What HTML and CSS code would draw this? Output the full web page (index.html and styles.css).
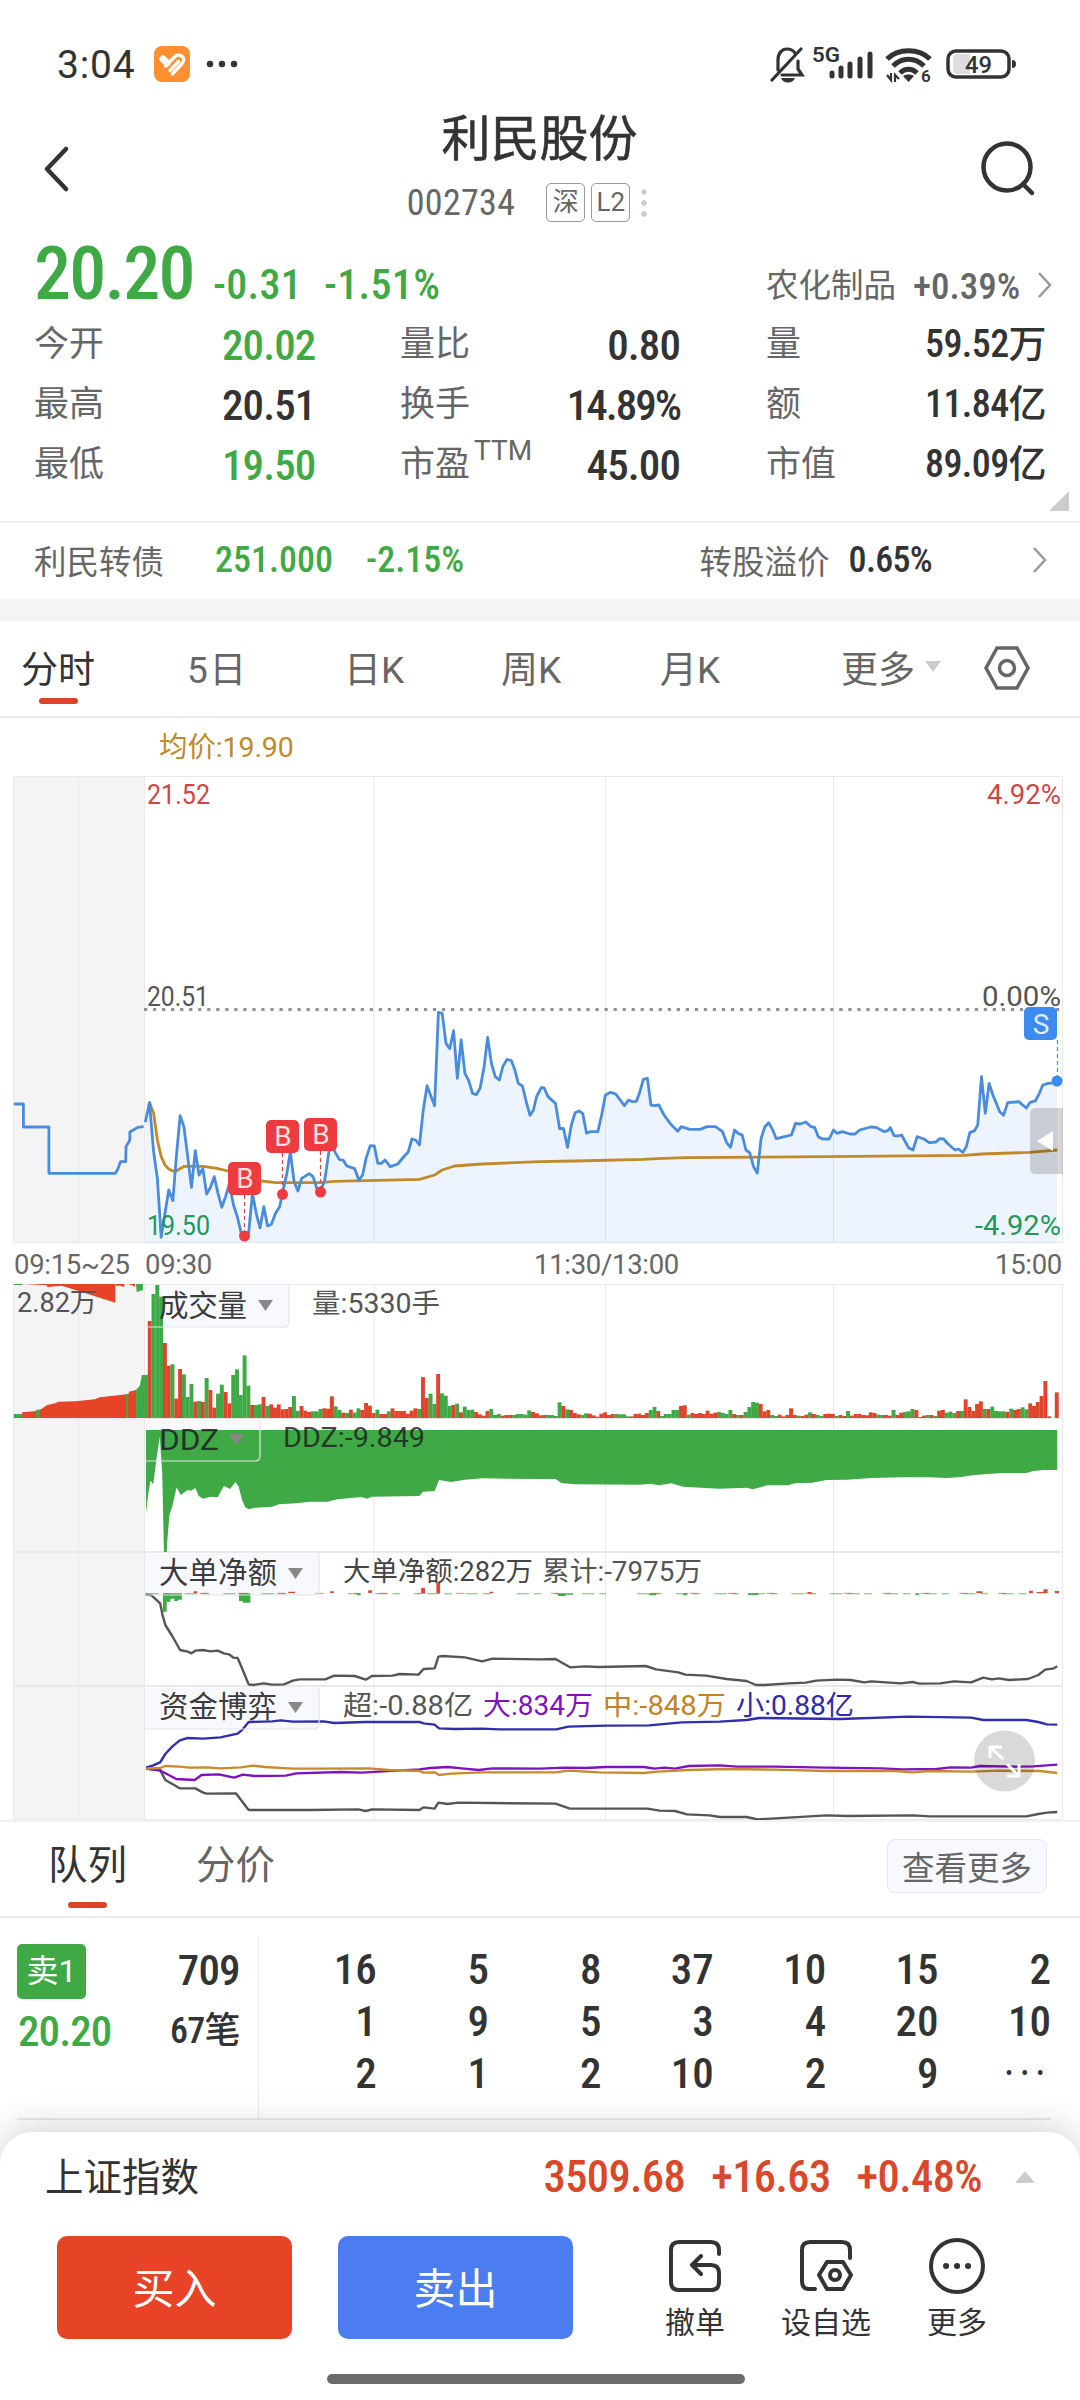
FILE: index.html
```html
<!DOCTYPE html>
<html lang="zh-CN">
<head>
  <meta charset="UTF-8">
  <title>利民股份 002734</title>
  <link rel="stylesheet" href="styles.css">
</head>
<body>
  <div class="status">
    <span class="clock">3:04</span>
    <svg class="app-icon" width="36" height="36" viewBox="0 0 36 36">
      <rect width="36" height="36" rx="8" fill="#ff8f30"/>
      <path d="M9 13L13 17" stroke="#fff" stroke-width="7" stroke-linecap="round"/>
      <path d="M11.500 20L20 11.500C24 6 33 11 28.500 17L18.500 28M16 24.500L24.500 15.500" fill="none" stroke="#fff" stroke-width="3.400" stroke-linecap="round" stroke-linejoin="round"/>
    </svg>
    <svg class="dots" width="34" height="8" viewBox="0 0 34 8"><circle cx="4" cy="4" r="3.2"/><circle cx="16" cy="4" r="3.2"/><circle cx="28" cy="4" r="3.2"/></svg>
    <svg class="sys" width="250" height="44" viewBox="768 44 250 44">
      <g fill="none" stroke="#333" stroke-width="3.2" stroke-linecap="round">
        <path d="M778 70V60C778 53 782 49 787 49C791 49 793 50 795 53M798 61V69L802 75H782"/>
        <path d="M801 49L772 80"/>
      </g>
      <path d="M781 78h14c-2 6-12 6-14 0z" fill="#333"/>
      <text class="net" x="812" y="62" textLength="28" lengthAdjust="spacingAndGlyphs">5G</text>
      <g stroke="#333" stroke-width="5" stroke-linecap="round">
        <path d="M832 73v3M841 68v8M850 64v12M860 59v17M870 54v22"/>
      </g>
      <g fill="none" stroke="#333" stroke-width="5">
        <path d="M887 59C898 48 919 48 930 59"/>
        <path d="M893 66C902 57 915 57 924 66"/>
        <path d="M900 73C905 68 912 68 917 73"/>
      </g>
      <path d="M903 76c3-2 8-2 11 0l-5.500 6z" fill="#333"/>
      <path d="M887 75l4 5V73M895 82V75l4 4" fill="none" stroke="#333" stroke-width="2.200"/>
      <text class="net wifi6" x="921" y="82">6</text>
      <rect x="948" y="51" width="61" height="26" rx="8" fill="none" stroke="#333" stroke-width="3.500"/>
      <path d="M958 54h12v20h-12q-5 0-5-5V59q0-5 5-5z" fill="#ddd"/>
      <path d="M1012 60q4 0 4 4t-4 4z" fill="#333"/>
      <text class="net batt" x="965" y="73" textLength="27" lengthAdjust="spacingAndGlyphs">49</text>
    </svg>
  </div>

  <header class="header">
    <svg class="back" width="30" height="50" viewBox="0 0 30 50"><path d="M25 5L6 25L25 45"/></svg>
    <div class="title">
      <h1>利民股份</h1>
      <div class="code-row">
        <span class="code">002734</span>
        <span class="tag">深</span>
        <span class="tag">L2</span>
        <i class="more-dots"></i>
      </div>
    </div>
    <svg class="search" width="56" height="56" viewBox="0 0 56 56"><circle cx="26" cy="26" r="23.500"/><path d="M42 43L51 52"/></svg>
  </header>

  <section class="quote">
    <div class="price-row">
      <span class="price num green">20.20</span>
      <span class="chg green">-0.31</span>
      <span class="chg green pct">-1.51%</span>
      <span class="industry">农化制品</span>
      <span class="ind-chg">+0.39%</span>
      <svg class="chev" width="16" height="28" viewBox="0 0 16 28"><path d="M2 2L13 14L2 26"/></svg>
    </div>
    <div class="stats">
      <span class="label">今开</span><span class="num v1 green">20.02</span>
      <span class="label">量比</span><span class="num">0.80</span>
      <span class="label l3">量</span><span class="num unit">59.52万</span>
      <span class="label">最高</span><span class="num v1">20.51</span>
      <span class="label">换手</span><span class="num tight">14.89%</span>
      <span class="label l3">额</span><span class="num unit">11.84亿</span>
      <span class="label">最低</span><span class="num v1 green">19.50</span>
      <span class="label">市盈<sup>TTM</sup></span><span class="num">45.00</span>
      <span class="label l3">市值</span><span class="num unit">89.09亿</span>
    </div>
    <i class="corner"></i>
  </section>

  <section class="bond">
    <span>利民转债</span>
    <b class="green b1">251.000</b>
    <b class="green b2">-2.15%</b>
    <span class="prem">转股溢价</span>
    <b class="b3">0.65%</b>
    <svg class="chev" width="16" height="28" viewBox="0 0 16 28"><path d="M2 2L13 14L2 26"/></svg>
  </section>

  <nav class="tabs">
    <span class="on">分时</span>
    <span>5日</span>
    <span>日K</span>
    <span>周K</span>
    <span>月K</span>
    <span class="more">更多<i class="down"></i></span>
    <svg width="48" height="48" viewBox="0 0 48 48"><path d="M14 4H34L45 24L34 44H14L3 24Z"/><circle cx="24" cy="24" r="7.500"/></svg>
  </nav>

  <div class="avg">均价:19.90</div>

  <svg class="chart" width="1080" height="468" viewBox="0 776 1080 468">
    <rect x="13" y="776" width="131" height="467" fill="#f4f4f4"/>
    <path class="grid" d="M13 776.500H1062.500V1242.500H13.500V776M78.500 776V1242M144.500 776V1242M374 776V1242M605.500 776V1242M833.500 776V1242"/>
    <g transform="translate(0 960) scale(.34439 .33333)">
      <path id="area" fill="#4b8ff2" fill-opacity=".1"/>
      <polyline class="ln avg-line" points="434,427 446,460 457,540 468,590 479,615 490,627 502,633 512,633 523,626 535,619 590,619 630,625 662,633 760,663 800,668 930,668 970,664 1218,658 1262,645 1284,630 1320,618 1400,612 1568,605 1668,603 1868,598 1908,596 1990,593 2400,590 2800,586 2850,582 2990,577 3070,570"/>
      <polyline class="ln blue" points="40,432 68,432 68,501 142,501 142,640 335,640 343,625 350,605 365,605 366,560 377,540 377,516 400,502 417,500"/>
      <polyline id="price" class="ln blue" points="422,487 434,427 446,575 457,655 468,832 479,760 490,690 502,722 512,590 523,467 534,500 545,590 556,682 567,572 578,645 589,625 600,702 611,682 622,650 633,700 644,742 655,710 666,672 678,735 689,770 700,818 711,828 722,818 733,700 744,760 755,804 766,740 777,798 788,793 800,760 812,740 822,690 833,640 843,575 854,665 865,693 876,655 898,641 909,650 920,685 930,695 943,660 955,575 965,560 975,580 985,598 997,601 1007,618 1030,626 1042,660 1053,645 1063,595 1075,557 1087,558 1097,610 1107,610 1118,600 1133,620 1155,612 1174,588 1185,577 1196,537 1207,540 1218,555 1229,450 1240,377 1262,437 1273,157 1284,160 1295,250 1306,266 1317,212 1328,355 1339,240 1350,340 1361,362 1372,400 1383,404 1394,385 1405,325 1416,232 1427,310 1438,350 1450,360 1460,320 1472,298 1485,302 1495,330 1505,370 1517,378 1528,425 1539,466 1549,450 1558,410 1568,390 1573,382 1580,384 1591,410 1613,430 1625,506 1636,505 1648,562 1659,495 1670,458 1681,453 1692,460 1703,520 1713,515 1736,515 1747,465 1758,405 1773,397 1788,402 1813,437 1825,420 1836,425 1848,424 1858,395 1868,358 1880,355 1890,435 1901,437 1913,435 1928,465 1948,493 1968,514 1978,500 2003,508 2033,508 2053,500 2078,500 2098,515 2110,548 2121,562 2133,510 2143,520 2155,525 2166,570 2177,578 2188,620 2199,639 2210,535 2221,500 2232,488 2243,508 2254,536 2278,530 2298,525 2310,490 2323,492 2340,486 2355,500 2366,503 2376,530 2388,537 2408,537 2420,510 2430,520 2446,515 2468,522 2483,522 2496,510 2528,501 2543,502 2568,515 2578,512 2585,503 2596,527 2608,528 2618,525 2638,563 2651,570 2663,530 2683,537 2698,548 2718,546 2728,536 2740,537 2753,552 2773,570 2783,567 2796,577 2806,560 2816,518 2830,512 2839,495 2850,350 2861,460 2872,370 2883,405 2903,455 2914,466 2926,428 2958,425 2980,444 2991,427 3006,423 3018,400 3028,375 3043,370 3070,368"/>
    </g>
    <path d="M144 1009.500H1062" stroke="#909090" stroke-width="3" stroke-dasharray="3.200 5.830"/>
    <g class="txt">
      <text class="red" x="147" y="804" textLength="63" lengthAdjust="spacingAndGlyphs">21.52</text>
      <text class="red" x="987" y="804" textLength="74" lengthAdjust="spacingAndGlyphs">4.92%</text>
      <text x="147" y="1006" textLength="62" lengthAdjust="spacingAndGlyphs">20.51</text>
      <text x="982" y="1006" textLength="79" lengthAdjust="spacingAndGlyphs">0.00%</text>
      <text class="dn" x="147" y="1235" textLength="63" lengthAdjust="spacingAndGlyphs">19.50</text>
      <text class="dn" x="975" y="1235" textLength="86" lengthAdjust="spacingAndGlyphs">-4.92%</text>
    </g>
    <g class="mark">
      <path d="M244.500 1195V1234" stroke-width="2.500"/><path d="M282.500 1153V1194M320.500 1151V1192"/>
      <circle cx="244.500" cy="1236" r="5.500"/><circle cx="282.500" cy="1194.300" r="5.500"/><circle cx="320.500" cy="1192" r="5.500"/>
      <rect x="228" y="1162" width="33" height="33" rx="5"/><rect x="266" y="1120" width="33" height="33" rx="5"/><rect x="304" y="1118" width="33" height="33" rx="5"/>
      <text x="245" y="1188">B</text><text x="283" y="1146">B</text><text x="321" y="1144">B</text>
    </g>
    <g class="mark sell">
      <path d="M1057.500 1040V1076"/>
      <circle cx="1057" cy="1081" r="5.500"/>
      <rect x="1024" y="1007" width="33" height="33" rx="5"/>
      <text x="1041" y="1034">S</text>
    </g>
    <path d="M1063 1108H1036q-6 0-6 6V1168q0 6 6 6h27z" fill="#000" fill-opacity=".16"/>
    <path d="M1037 1141L1053 1131V1151z" fill="#fff"/>
  </svg>

  <div class="axis"><span>09:15~25</span><span>09:30</span><span>11:30/13:00</span><span>15:00</span></div>

  <svg class="chart" width="1080" height="537" viewBox="0 1284 1080 537">
    <rect x="13" y="1284" width="131" height="537" fill="#f4f4f4"/>
    <path class="grid" d="M13 1284.500H1062.500V1820M13.500 1284V1820M78.500 1284V1820M144.500 1284V1820M374 1284V1820M605.500 1284V1820M833.500 1284V1820M13 1418.500H1062M13 1819.500H1062"/>
    <path class="grid thick" d="M13 1552H1062M13 1686H1062"/>
    <g class="box">
      <path d="M145 1285H289V1322q0 5-5 5H145z"/>
      <path d="M145 1419.500H260V1456q0 5-5 5H145z"/>
      <path d="M145 1553.500H319V1590q0 5-5 5H145z"/>
      <path d="M145 1687.500H319V1724q0 5-5 5H145z"/>
    </g>

    <!-- 成交量 -->
    <g transform="translate(0 1240) scale(.34439 .33333)">
      <path fill="#e64327" d="M64 534V517L100 514L120 507L137 495L160 490L170 485L220 484L275 478L290 472L330 467L374 462V455L395 450V534zM70 132L137 136V141L180 137L335 188V132zM336 132h25v9l-12-4h-12zM372 132h20v9l-8-5z"/>
      <path fill="#3fa945" d="M40 534V522H64V534zM105 534V509H116V534zM366 534V462H372V534zM395 534V450L406 437L412 405H420V534zM40 132h25v3H40zM395 132h20v18l-18 6z"/>
      <g id="vol"></g>
    </g>

    <!-- DDZ -->
    <path transform="translate(0 1240) scale(.34439 .33333)" fill="#3fa945" d="M424 570V820L430 765L437 722L445 733L455 650L464 590L471 700L476 936H484L486 900L492 825L500 800L513 742L525 765L545 750L555 752L567 744L577 768L590 776L612 770L632 772L650 738L668 747L684 726L693 740L703 780L712 802L722 808L740 803L790 800L810 793L860 790L900 785L950 785L980 778L1050 771L1065 776L1080 770L1218 768L1228 755L1262 753L1275 720L1310 726L1350 719L1400 715L1568 717L1613 717L1630 729L1668 733L1860 734L1888 731L1913 736L1950 730L1983 740L2088 746L2168 743L2186 748L2228 736L2288 736L2308 730L2358 728L2400 720L2460 719L2530 714L2620 712L2700 712L2750 714L2790 711L2830 705L2910 699L2980 699L3000 693L3030 690H3070V570z"/>

    <g transform="translate(0 1530) scale(.34439 .33333)">
      <!-- 大单净额 -->
      <path d="M424 191H860M1010 191H1060M1090 191H1220M1240 191H1450M1500 191H1620M1690 191H1760M1850 191H2450M2460 191H3000" stroke="#3fa945" stroke-width="3" stroke-dasharray="36 14 22 40" opacity=".75"/>
      <path d="M540 190H1040M1060 190H1400M1560 190H1700M1850 190H3000" stroke="#e64327" stroke-width="2.500" stroke-dasharray="24 88" stroke-dashoffset="-40" opacity=".75"/>
      <path fill="#3fa945" d="M473 190h11v55h-11zM484 190h11v25h-11zM495 190h11v16h-11zM506 190h11v23h-11zM517 190h11v19h-11zM694 190h11v23h-11zM705 190h22v28h-22zM1036 190h11v6h-11zM1620 190h22v8h-22zM1642 190h22v4h-22zM1885 190h20v6h-20zM1984 190h11v6h-11zM2172 190h30v5h-30zM2658 190h11v5h-11z"/>
      <path fill="#d84a32" d="M562 184h11v5h-11zM837 185h20v4h-20zM958 184h11v5h-11zM1069 181h11v8h-11zM1223 174h11v16h-11zM1267 158h11v32h-11zM1421 185h11v5h-11zM2835 184h18v5h-18zM2988 182h11v8h-11zM3010 186h20v4h-20zM3030 178h12v12h-12zM3063 183h12v7h-12zM2345 186h11v4h-11z"/>
      <polyline class="ln gray" points="422,193 440,196 465,220 472,255 480,285 500,318 523,360 545,365 556,370 567,362 590,360 610,364 632,362 650,370 665,373 678,383 690,384 705,420 722,463 735,465 765,460 790,464 825,463 850,452 870,448 945,448 970,437 1030,438 1062,449 1080,438 1140,437 1160,432 1215,434 1230,417 1262,415 1273,380 1285,378 1350,382 1400,394 1430,386 1568,388 1613,387 1655,412 1700,409 1740,411 1875,408 1905,418 1970,427 1990,434 2050,437 2110,447 2168,453 2195,465 2220,465 2290,460 2340,458 2370,452 2430,449 2470,450 2510,457 2530,454 2615,460 2650,456 2670,461 2730,460 2770,454 2820,457 2855,443 2880,448 2900,445 2930,450 2985,447 3015,435 3035,419 3060,415 3070,409"/>
      <!-- 资金博弈 -->
      <polyline class="ln navy" points="424,713 445,706 465,697 480,672 500,650 522,631 545,624 590,626 640,622 690,611 705,598 722,576 790,574 815,571 850,575 940,574 970,579 1060,576 1218,576 1230,580 1262,584 1275,595 1320,597 1400,596 1450,598 1615,598 1650,590 1760,587 1885,586 1980,577 2090,575 2168,570 2205,564 2440,567 2640,560 2820,563 2855,570 2980,570 3015,576 3040,583 3070,584"/>
      <polyline class="ln gray" points="424,716 465,720 480,750 522,775 567,775 590,788 600,791 685,790 722,840 900,840 1040,838 1062,843 1080,838 1218,840 1230,832 1262,836 1273,818 1300,822 1330,818 1613,821 1655,836 1880,836 1915,842 1960,843 1995,853 2060,856 2090,861 2168,861 2200,868 2290,863 2400,856 2460,858 2650,856 2700,859 2980,859 3015,852 3040,848 3070,846"/>
      <polyline class="ln purple" points="424,716 465,722 490,735 512,747 565,750 585,735 635,733 680,743 705,734 740,738 830,737 860,730 990,726 1050,728 1150,722 1218,718 1250,714 1300,711 1340,715 1390,720 1430,715 1568,716 1640,713 1700,714 1760,711 1870,711 1900,716 1930,713 1960,716 2000,708 2090,706 2140,710 2250,710 2400,713 2560,715 2620,718 2720,717 2760,712 2820,713 2845,708 2940,710 3000,709 3070,704"/>
      <polyline class="ln orange" points="424,716 465,714 480,708 520,710 550,713 600,712 640,715 700,712 735,707 770,711 850,716 940,716 1070,715 1130,720 1218,723 1230,728 1262,727 1275,735 1310,731 1400,727 1613,727 1650,722 1740,727 1870,729 1910,725 2000,720 2110,717 2250,719 2400,723 2600,723 2650,727 2700,723 2820,725 2900,722 3020,723 3070,729"/>
    </g>

    <g class="box-line">
      <path d="M145 1327H284q5 0 5-5V1285"/>
      <path d="M145 1461H255q5 0 5-5V1420"/>
      <path d="M145 1595H314q5 0 5-5V1553"/>
      <path d="M145 1729H314q5 0 5-5V1687"/>
    </g>
    <path fill="#888" d="M258 1300h15l-7.500 11zM229 1434h15l-7.500 11zM288 1568h15l-7.500 11zM288 1702h15l-7.500 11z"/>
    <g class="txt name">
      <text x="159" y="1316" textLength="88">成交量</text>
      <text x="159" y="1450" textLength="60" lengthAdjust="spacingAndGlyphs">DDZ</text>
      <text x="159" y="1583" textLength="118">大单净额</text>
      <text x="159" y="1717" textLength="118">资金博弈</text>
    </g>
    <g class="txt">
      <text x="17" y="1312" textLength="80" lengthAdjust="spacingAndGlyphs">2.82万</text>
      <text x="312" y="1313" textLength="128" lengthAdjust="spacingAndGlyphs">量:5330手</text>
      <text class="dk" x="283" y="1447" textLength="142" lengthAdjust="spacingAndGlyphs">DDZ:-9.849</text>
      <text class="dk" x="343" y="1581" textLength="190" lengthAdjust="spacingAndGlyphs">大单净额:282万</text>
      <text x="542" y="1581" textLength="160" lengthAdjust="spacingAndGlyphs">累计:-7975万</text>
      <text x="343" y="1715" textLength="130" lengthAdjust="spacingAndGlyphs">超:-0.88亿</text>
      <text x="483" y="1715" textLength="110" lengthAdjust="spacingAndGlyphs" fill="#8012bd">大:834万</text>
      <text x="603" y="1715" textLength="123" lengthAdjust="spacingAndGlyphs" fill="#c08426">中:-848万</text>
      <text x="736" y="1715" textLength="118" lengthAdjust="spacingAndGlyphs" fill="#3029ab">小:0.88亿</text>
    </g>
    <circle cx="1004.500" cy="1761" r="30.500" fill="#000" fill-opacity=".15"/>
    <path d="M1003 1759L990 1747M990 1758V1747H1002M1007 1764L1019 1776M1007 1776H1019V1764" fill="none" stroke="#fff" stroke-width="3"/>
  </svg>

  <section class="queue-head">
    <span class="on">队列</span>
    <span>分价</span>
    <button>查看更多</button>
  </section>

  <section class="queue">
    <div class="side">
      <span class="badge">卖1</span><span class="num">709</span>
      <span class="num green">20.20</span><span class="num cnt">67笔</span>
    </div>
    <div class="orders num">
      <span>16</span><span>5</span><span>8</span><span>37</span><span>10</span><span>15</span><span>2</span>
      <span>1</span><span>9</span><span>5</span><span>3</span><span>4</span><span>20</span><span>10</span>
      <span>2</span><span>1</span><span>2</span><span>10</span><span>2</span><span>9</span><span class="dotdot">···</span>
    </div>
  </section>

  <footer class="sheet">
    <div class="index-row">
      <span>上证指数</span>
      <b class="i1">3509.68</b><b class="i2">+16.63</b><b class="i3">+0.48%</b>
      <i class="up"></i>
    </div>
    <div class="actions">
      <button class="buy">买入</button>
      <button class="sell-btn">卖出</button>
      <div class="act">
        <svg width="58" height="58" viewBox="0 0 58 58"><path d="M53 17V13Q53 5 45 5H13Q5 5 5 13V45Q5 53 13 53H45Q53 53 53 45V36Q53 28 45 28H26M35 19L26 28L35 37"/></svg>
        撤单
      </div>
      <div class="act wide">
        <svg width="58" height="58" viewBox="0 0 58 58"><path d="M53 21V13Q53 5 45 5H13Q5 5 5 13V44Q5 52 12 52H18M30 25H46L54 38L46 52H30L22 38Z"/><circle cx="38" cy="38" r="5"/></svg>
        设自选
      </div>
      <div class="act">
        <svg width="58" height="58" viewBox="0 0 58 58"><circle cx="29" cy="29" r="26"/><path class="pt" d="M18 29h.1M29 29h.1M40 29h.1"/></svg>
        更多
      </div>
    </div>
    <div class="home"></div>
  </footer>

  <script>
    // 分钟成交量：r 涨 g 跌，数字为柱顶位置
    const tops = 'g405 r243 g162 g135 g170 r309 r377 g373 r476 r387 g403 g471 g432 r485 g483 r486 g414 r450 r503 g461 g434 r456 r490 g405 g388 g465 g346 g437 r495 g495 g493 r471 g498 r493 r503 r493 r508 r507 r501 g468 g513 r498 r512 r516 g514 g514 g507 r505 r506 r469 g499 g510 r518 g519 r509 g518 g505 r510 r489 r497 r519 g509 r522 r522 g514 r505 r513 r513 r513 r521 r512 r505 g507 r411 r474 g461 g492 r402 g460 g467 g498 r495 g491 r517 g500 g510 g509 r516 r523 r527 r513 g507 g525 g522 r527 r525 r525 g525 g522 g522 g524 g511 r516 r520 r526 r525 g525 g525 g528 g487 r498 g508 r510 r519 r523 g525 g520 r521 r526 r530 r521 r517 r525 r522 g522 g523 g523 g529 r529 r522 r521 r525 r519 g510 g501 r513 g528 g522 g522 g510 g510 r498 r496 g524 r519 r522 r519 r522 r512 r521 r518 g516 g519 g522 g510 r522 g525 r525 g516 g501 g486 g488 r492 r514 r510 g525 g528 r524 r529 r525 r505 r525 g527 r528 r524 g517 r522 g525 g528 r522 r521 r522 g528 r525 r528 g513 r527 r522 r522 r525 r526 r517 r519 g524 g525 r525 r527 g510 r525 r518 g516 g514 g507 r510 g531 r527 g525 r525 g528 r512 r510 g518 g515 g519 r513 g513 r478 r501 r513 r492 r484 g507 r507 g500 g513 g514 g514 r516 g506 r510 r507 g502 g508 r490 r498 r486 r468 r423 r529 r534 r457'.split(' ');

    let bars = '';
    tops.forEach((t, i) => {
      const y = parseInt(t.slice(1));
      const color = t[0] === 'r' ? '#e0452b' : '#3fa945';
      bars += `<rect x="${(418 + i * 11.02).toFixed(1)}" y="${y}" width="11.4" height="${534 - y}" fill="${color}"/>`;
    });
    document.getElementById('vol').innerHTML = bars;

    const pts = document.getElementById('price').getAttribute('points');
    document.getElementById('area').setAttribute('d', 'M422,848 L' + pts.replace(/ /g, ' L') + ' L3070,848 Z');
  </script>
</body>
</html>
```
FILE: styles.css
```css
* {
  box-sizing: border-box;
}

body {
  margin: 0;
  width: 1080px;
  height: 2400px;
  overflow: hidden;
  background: #fff;
  color: #333;
  font-family: Roboto, "Noto Sans CJK SC", sans-serif;
  display: flex;
  flex-direction: column;
}

body > * {
  flex-shrink: 0;
}

.green {
  color: #3fa945;
}

.num {
  font-stretch: 75%;
  font-weight: 550;
  font-size: 43px;
  letter-spacing: -0.9px;
}

i {
  display: block;
}

/* status bar */
.status {
  height: 106px;
  padding: 44px 62px 0 57px;
  display: flex;
  align-items: flex-start;
}

.clock {
  font-size: 39px;
  line-height: 42px;
  letter-spacing: 0.8px;
  width: 97px;
}

.app-icon {
  margin-top: 2px;
}

.dots {
  margin: 16px 0 0 16px;
  fill: #333;
}

.sys {
  margin-left: auto;
  overflow: visible;
}

.net {
  font-size: 21px;
  font-weight: 600;
  fill: #333;
}

.wifi6 {
  font-size: 17px;
}

.batt {
  font-size: 24px;
  font-weight: 500;
}

/* header */
.header {
  height: 130px;
  padding: 0 43px 0 41px;
  display: flex;
  justify-content: space-between;
}

.header svg {
  fill: none;
  stroke: #333;
  stroke-width: 4.5;
  stroke-linecap: round;
  stroke-linejoin: round;
}

.back {
  margin-top: 38px;
}

.search {
  margin-top: 35px;
}

.title {
  display: flex;
  flex-direction: column;
  align-items: center;
}

h1 {
  margin: 0;
  padding: 0 0 0 27px;
  font-size: 49px;
  line-height: 68px;
  font-weight: 400;
  -webkit-text-stroke: 0.6px #333;
}

.code-row {
  display: flex;
  align-items: center;
  margin-top: 8px;
  height: 41px;
  padding-left: 2px;
  color: #666;
}

.code {
  font-size: 36px;
  font-stretch: 75%;
  letter-spacing: 0.3px;
  margin-right: 31px;
}

.tag {
  width: 39px;
  height: 39px;
  margin-right: 6px;
  border: 1.5px solid #999;
  border-radius: 5px;
  font-size: 26px;
  line-height: 36px;
  text-align: center;
}

.more-dots {
  width: 6px;
  height: 28px;
  margin-left: 5px;
  background: radial-gradient(circle at 3px 3px, #ccc 2.5px, transparent 3px) 0 0 / 6px 11px;
}

/* quote */
.quote {
  position: relative;
  height: 287px;
  padding: 0 34px;
  border-bottom: 2px solid #f1f1f1;
}

.price-row {
  display: flex;
  align-items: baseline;
  height: 79px;
  line-height: 75px;
}

.price {
  font-size: 74px;
  letter-spacing: -1.8px;
  width: 179px;
}

.chg {
  font-size: 42px;
  font-stretch: 75%;
  font-weight: 500;
  letter-spacing: 0.3px;
  width: 111px;
}

.pct {
  width: 442px;
}

.industry {
  font-size: 32.5px;
  color: #666;
  width: 147px;
  position: relative;
  top: -2px;
}

.ind-chg {
  font-size: 37px;
  font-stretch: 75%;
  color: #666;
  font-weight: 500;
  width: 124px;
}

.price-row,
.bond {
  white-space: nowrap;
}

.price-row > * {
  flex-shrink: 0;
}

.chev {
  fill: none;
  stroke: #999;
  stroke-width: 2.5;
}

.stats {
  display: grid;
  grid-template-columns: 188px 178px 136px 144px 120px 246px;
  grid-auto-rows: 60px;
  line-height: 60px;
}

.stats .num {
  text-align: right;
  white-space: nowrap;
}

.stats .v1 {
  text-align: left;
}

.stats .tight {
  letter-spacing: -2px;
}

.stats .unit {
  font-size: 38px;
  font-weight: 500;
  letter-spacing: -0.6px;
  line-height: 58px;
}

.label {
  font-size: 35px;
  color: #666;
  white-space: nowrap;
}

.l3 {
  padding-left: 86px;
}

sup {
  font-size: 28px;
  line-height: 0;
  vertical-align: 16px;
  margin-left: 4px;
}

.corner {
  position: absolute;
  right: 11px;
  bottom: 10px;
  border: 10px solid;
  border-color: transparent #ccc #ccc transparent;
}

.bond {
  display: flex;
  align-items: center;
  height: 76px;
  padding: 0 32px 3px 34px;
  font-size: 32.5px;
  color: #666;
}

.bond b {
  font-size: 36px;
  font-stretch: 75%;
  font-weight: 550;
  padding-top: 1px;
}

.bond .b1 {
  margin-left: 51px;
  width: 151px;
}

.bond .b3 {
  color: #333;
  margin-left: 19px;
  letter-spacing: -0.7px;
}

.prem {
  margin-left: auto;
}

.bond .b2 {
  width: 110px;
}

.bond .chev {
  margin-left: 100px;
}

/* tabs */
.tabs {
  display: flex;
  align-items: center;
  height: 119px;
  border-top: 22px solid #f4f4f4;
  border-bottom: 2px solid #ececec;
  padding: 0 0 4px 21px;
  font-size: 37px;
  color: #666;
}

.tabs span {
  position: relative;
  width: 157px;
}

.tabs span:nth-child(1) {
  width: 166px;
}

.tabs span:nth-child(2) {
  letter-spacing: 1.5px;
}

.tabs span:nth-child(4) {
  width: 159px;
}

.tabs span:nth-child(5) {
  width: 181px;
}

.tabs .more {
  display: flex;
  align-items: center;
  gap: 10px;
  width: 142px;
}

.tabs svg {
  margin-top: 3px;
  fill: none;
  stroke: #666;
  stroke-width: 3.5;
}

.on {
  color: #333;
}

.on::after {
  content: "";
  position: absolute;
  left: 18px;
  bottom: -10px;
  width: 39px;
  height: 6px;
  border-radius: 3px;
  background: #dd4328;
}

.down {
  border: 8px solid transparent;
  border-top: 11px solid #ccc;
  border-bottom: 0;
}

.avg {
  height: 58px;
  padding-left: 159px;
  font-size: 28.5px;
  line-height: 59px;
  color: #c08a28;
  letter-spacing: -0.1px;
}

/* charts */
.chart {
  display: block;
}

.grid {
  fill: none;
  stroke: #e9e9e9;
}

.thick {
  stroke-width: 2;
}

.ln {
  fill: none;
  stroke-width: 2.8;
  stroke-linejoin: round;
  vector-effect: non-scaling-stroke;
}

.blue { stroke: #4a8cdc; }
.avg-line { stroke: #c08a28; }
.gray { stroke: #555; stroke-width: 2.4; }
.navy { stroke: #302eaf; stroke-width: 2.4; }
.purple { stroke: #8012bd; stroke-width: 2.4; }
.orange { stroke: #c88a2c; stroke-width: 2.4; }

.txt {
  font-size: 27.5px;
  fill: #555;
}

.txt .red { fill: #d04545; }
.txt .dn { fill: #21985a; }
.txt .dk { fill: #222; fill-opacity: .85; }

.name {
  font-size: 29.5px;
  fill: #222;
  fill-opacity: .9;
}

.mark {
  fill: #ee3b40;
  stroke: none;
}

.mark path {
  stroke: #d04545;
  stroke-width: 1.2;
  stroke-dasharray: 4 3;
}

.mark text {
  fill: #fff;
  fill-opacity: .85;
  font-size: 28px;
  text-anchor: middle;
}

.sell { fill: #3d8bef; }
.sell path { stroke: #3d8bef; }

.box { fill: #f8f9fe; }

.box-line {
  fill: none;
  stroke: #e4e5ea;
  stroke-width: 1.2;
}

.axis {
  display: flex;
  height: 40px;
  padding: 0 18px 0 14px;
  font-size: 27.5px;
  line-height: 42px;
  letter-spacing: -0.3px;
  color: #666;
}

.axis span:nth-child(1) { width: 131px; }
.axis span:nth-child(2) { width: 389px; }
.axis span:nth-child(4) { margin-left: auto; }

/* queue */
.queue-head {
  display: flex;
  align-items: center;
  height: 98px;
  margin-top: -1px;
  padding: 0 33px 6px 48px;
  border-top: 2px solid #f1f1f1;
  border-bottom: 2px solid #ececec;
  font-size: 39.5px;
  line-height: 54px;
  color: #666;
}

.queue-head span {
  position: relative;
  width: 148px;
}

.queue-head .on::after {
  left: 20px;
  bottom: -15px;
}

.queue-head button {
  margin-left: auto;
  width: 160px;
  height: 54px;
  padding: 0;
  border: 1px solid #e4e6ee;
  border-radius: 8px;
  background: #f8f9fe;
  font: 32.5px "Noto Sans CJK SC";
  line-height: 46px;
  color: #666;
}

.queue {
  display: flex;
  height: 202px;
  margin: 0 29px 0 17px;
  padding-top: 20px;
  border-bottom: 2px solid #e9e9e9;
}

.side {
  display: grid;
  grid-template-columns: auto auto;
  grid-template-rows: 61px auto;
  justify-content: space-between;
  width: 243px;
  padding: 0 18px 0 1px;
  border-right: 1px solid #e9e9e9;
  line-height: 65px;
}

.side .num:nth-child(even) {
  text-align: right;
}

.badge {
  width: 69px;
  height: 55px;
  margin: 6px 0 0 -1px;
  border-radius: 5px;
  background: #3fa945;
  color: #fff;
  font-size: 32px;
  line-height: 54px;
  text-align: center;
}

.side .cnt {
  font-size: 36px;
  font-weight: 500;
  letter-spacing: -0.8px;
  line-height: 64px;
}

.orders {
  flex: 1;
  display: grid;
  grid-template-columns: 118px repeat(6, 112.4px);
  grid-template-rows: repeat(3, 52px);
  padding-top: 4px;
  line-height: 54px;
  text-align: right;
  letter-spacing: 0;
}

.dotdot {
  font-size: 36px;
  letter-spacing: 6px;
}

/* bottom sheet */
.sheet {
  flex: 1;
  margin-top: 12px;
  border-radius: 32px 32px 0 0;
  background: #fff;
  box-shadow: 0 -6px 34px rgba(0, 0, 0, .16);
}

.index-row {
  display: flex;
  align-items: center;
  height: 90px;
  padding: 0 45px;
  font-size: 38.5px;
}

.index-row span {
  margin-top: -6px;
}

.index-row b {
  font-size: 44.5px;
  font-stretch: 75%;
  font-weight: 480;
  letter-spacing: -0.6px;
  color: #d9482b;
}

.i1 { margin-left: auto; }
.i2, .i3 { margin-left: 26px; }

.up {
  margin-left: 33px;
  border: 10px solid transparent;
  border-top: 0;
  border-bottom: 12px solid #ccc;
}

.actions {
  display: flex;
  height: 117px;
  padding: 14px 0 0 57px;
}

.actions button {
  width: 235px;
  height: 103px;
  padding: 0 0 4px;
  margin-right: 46px;
  border: 0;
  border-radius: 10px;
  color: #fff;
  background: #e64327;
  font: 42px "Noto Sans CJK SC";
}

.actions .sell-btn {
  background: #4b7df0;
  margin-right: 76px;
}

.act {
  display: flex;
  flex-direction: column;
  align-items: center;
  width: 92px;
  font-size: 30px;
  line-height: 55px;
}

.wide {
  width: 170px;
}

.act svg {
  flex-shrink: 0;
  margin-top: 1px;
  fill: none;
  stroke: #333;
  stroke-width: 4;
  stroke-linecap: round;
  stroke-linejoin: round;
}

.act .pt {
  stroke-width: 6;
}

.home {
  width: 418px;
  height: 10px;
  margin: 35px 0 0 327px;
  border-radius: 5px;
  background: #6b6b6b;
}
```
